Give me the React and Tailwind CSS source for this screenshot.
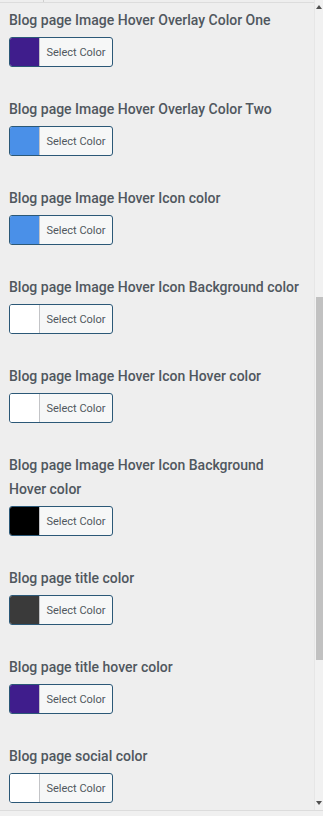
import React from 'react';

const fields = [
  { label: 'Blog page Image Hover Overlay Color One', color: '#3f1d8c' },
  { label: 'Blog page Image Hover Overlay Color Two', color: '#4a90e8' },
  { label: 'Blog page Image Hover Icon color', color: '#4a90e8' },
  { label: 'Blog page Image Hover Icon Background color', color: '#ffffff' },
  { label: 'Blog page Image Hover Icon Hover color', color: '#ffffff' },
  { label: 'Blog page Image Hover Icon Background Hover color', color: '#000000' },
  { label: 'Blog page title color', color: '#3a3a3a' },
  { label: 'Blog page title hover color', color: '#3f1d8c' },
  { label: 'Blog page social color', color: '#ffffff' },
];

function ColorField({ label, color }) {
  return (
    <div className="mb-[30px]">
      <div className="w-[292px] text-[14px] leading-[24px] font-medium text-[#50575e]">{label}</div>
      <button className="mt-[5px] flex h-[30px] w-[104px] overflow-hidden rounded-[3px] border border-[#2b5877] bg-[#f6f7f7]">
        <span className="h-full w-[30px] border-r border-[#c3c4c7]" style={{ backgroundColor: color }} />
        <span className="flex-1 self-center text-center text-[11px] leading-none text-[#50575e]">Select Color</span>
      </button>
    </div>
  );
}

export default function App() {
  return (
    <div className="h-[816px] w-[323px] overflow-hidden bg-[#f0f0f0] font-['Roboto',sans-serif]">
      <div className="flex h-[811px] border-b border-[#dcdcdc] bg-[#eeeeee]">
        {/* Settings list */}
        <div className="flex-1 overflow-hidden">
          <div className="flex h-[3px] border-b border-[#dcdcdc]">
            <div className="w-[44px] border-r border-[#cfcfcf]" />
          </div>
          <div className="pl-[9px] pt-[5px]">
            {fields.map(f => (
              <ColorField key={f.label} label={f.label} color={f.color} />
            ))}
          </div>
        </div>

        {/* Scrollbar */}
        <div className="flex w-[9px] flex-col border-l border-[#e6e6e6] bg-[#f1f1f1]">
          <div className="flex h-[14px] items-center justify-center">
            <div className="h-0 w-0 border-x-[3px] border-b-[4px] border-x-transparent border-b-[#505050]" />
          </div>
          <div className="h-[283px]" />
          <div className="mx-auto h-[363px] w-[7px] bg-[#c1c1c1]" />
          <div className="flex-1" />
          <div className="flex h-[14px] items-center justify-center">
            <div className="h-0 w-0 border-x-[3px] border-t-[4px] border-x-transparent border-t-[#505050]" />
          </div>
        </div>
      </div>
    </div>
  );
}
